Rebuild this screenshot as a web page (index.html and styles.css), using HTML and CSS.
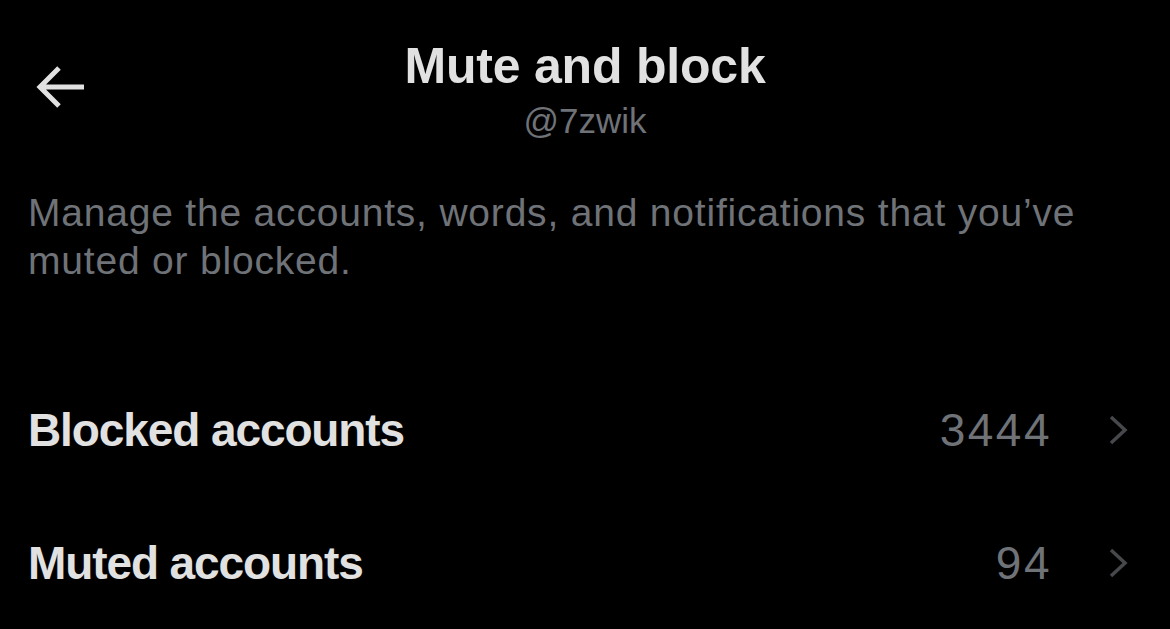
FILE: index.html
```html
<!DOCTYPE html>
<html lang="en">
<head>
    <meta charset="UTF-8">
    <meta name="viewport" content="width=device-width, initial-scale=1.0">
    <title>Mute and block</title>
    <link rel="stylesheet" href="styles.css">
</head>
<body>

    <!-- Top bar: back arrow + centred title -->
    <header class="topBar">
        <a class="backBtn" href="#" aria-label="Back">
            <svg width="50" height="44" viewBox="0 0 50 44">
                <path d="M49 22 H6 M24 3 L5 22 L24 41" fill="none" stroke="#e1e1e1" stroke-width="5" stroke-linejoin="miter"/>
            </svg>
        </a>
        <div class="titleBlock">
            <h1>Mute and block</h1>
            <div class="handle">@7zwik</div>
        </div>
        <div></div>
    </header>

    <p class="intro">Manage the accounts, words, and notifications that you’ve muted or blocked.</p>

    <ul class="settingsList">
        <li class="settingsRow">
            <span class="rowLabel">Blocked accounts</span>
            <span class="rowCount">3444</span>
            <svg class="chevron" width="20" height="32" viewBox="0 0 20 32">
                <path d="M3 3 L17 16 L3 29" fill="none" stroke="#46484b" stroke-width="3.5"/>
            </svg>
        </li>
        <li class="settingsRow">
            <span class="rowLabel">Muted accounts</span>
            <span class="rowCount">94</span>
            <svg class="chevron" width="20" height="32" viewBox="0 0 20 32">
                <path d="M3 3 L17 16 L3 29" fill="none" stroke="#46484b" stroke-width="3.5"/>
            </svg>
        </li>
    </ul>

</body>
</html>
```

FILE: styles.css
```css
body {
    background-color: #000;
    margin: 0;
    padding: 0;
    color: #e1e1e1;
    font-family: "Liberation Sans", Arial, sans-serif;
    overflow: hidden;
}

/* Header */
.topBar {
    display: grid;
    grid-template-columns: 1fr auto 1fr;
    padding: 36px 35px 0;
}

.backBtn {
    display: block;
    width: 50px;
    height: 44px;
    margin-top: 29px;
}

.backBtn svg {
    display: block;
}

.titleBlock {
    text-align: center;
}

.titleBlock h1 {
    margin: 0;
    font-size: 50px;
    line-height: 60px;
    font-weight: bold;
    letter-spacing: -0.2px;
    color: #e1e1e1;
}

.handle {
    margin-top: 4px;
    font-size: 35px;
    line-height: 42px;
    color: #6f7378;
}

/* Description */
.intro {
    margin: 47px 0 0;
    padding: 0 60px 0 28px;
    font-size: 39px;
    line-height: 48px;
    letter-spacing: 0.8px;
    color: #6f7378;
}

/* Rows */
.settingsList {
    list-style: none;
    margin: 78px 0 0;
    padding: 0;
}

.settingsRow {
    display: flex;
    align-items: center;
    height: 133px;
    padding: 0 42px 0 28px;
}

.rowLabel {
    flex: 1;
    font-size: 46px;
    line-height: 56px;
    font-weight: bold;
    letter-spacing: -1.1px;
    color: #e1e1e1;
}

.rowCount {
    font-size: 46px;
    line-height: 56px;
    color: #6f7378;
    letter-spacing: 2.5px;
    margin-right: 56px;
}

.chevron {
    display: block;
}
```
